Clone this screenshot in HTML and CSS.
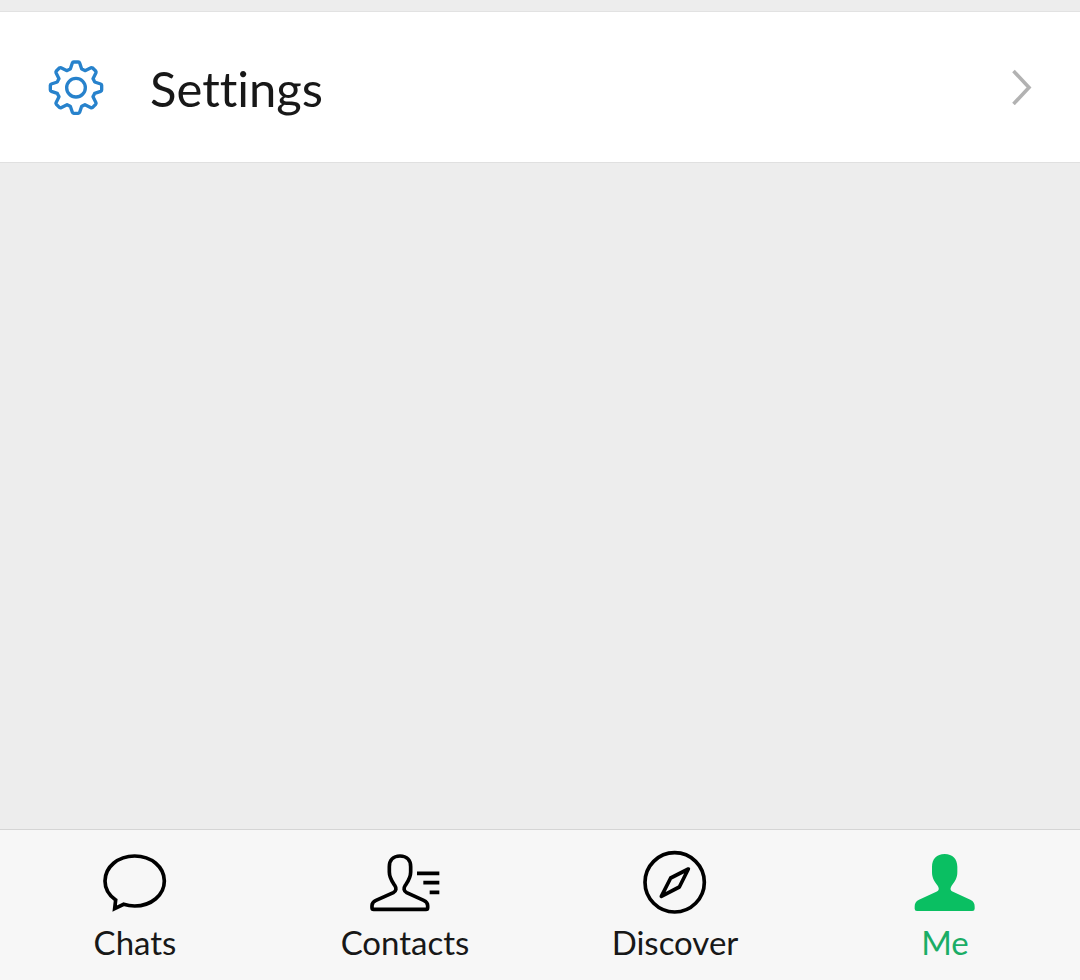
FILE: index.html
```html
<!DOCTYPE html>
<html lang="en">
<head>
<meta charset="utf-8">
<meta name="viewport" content="width=device-width, initial-scale=1">
<title>Me</title>
<link rel="stylesheet" href="styles.css">
</head>
<body>
<main class="content">
  <a class="cell" href="#settings">
    <svg class="cell-icon" viewBox="0 0 180 180" aria-hidden="true">
      <g transform="translate(90 92)" fill="none" stroke="#2782cc" stroke-width="10" stroke-linejoin="round">
        <path d="M-17-56L-11-74Q-10-77-7-77H7Q10-77 11-74L17-56Q22-54 27-51L45-60Q47-61 50-59L59-50Q61-47 60-45L51-27Q54-22 56-17L74-11Q77-10 77-7V7Q77 10 74 11L56 17Q54 22 51 27L60 45Q61 47 59 50L50 59Q47 61 45 60L27 51Q22 54 17 56L11 74Q10 77 7 77H-7Q-10 77-11 74L-17 56Q-22 54-27 51L-45 60Q-47 61-50 59L-59 50Q-61 47-60 45L-51 27Q-54 22-56 17L-74 11Q-77 10-77 7V-7Q-77-10-74-11L-56-17Q-54-22-51-27L-60-45Q-61-47-59-50L-50-59Q-47-61-45-60L-27-51Q-22-54-17-56Z"/>
        <circle r="28"/>
      </g>
    </svg>
    <span class="cell-label">Settings</span>
    <svg class="chevron" viewBox="0 0 20 36" aria-hidden="true"><path d="M1.500 2L17 18.500L1.500 35" fill="none" stroke="#b2b2b2" stroke-width="3.600"/></svg>
  </a>
</main>
<nav class="tabs" aria-label="Main">
  <a class="tab" href="#chats">
    <svg class="tab-icon" viewBox="0 30 270 204" aria-hidden="true"><path d="M74 206L101 193Q117 198 134 198C184 198 223 165 223 123S184 48 134 48S45 81 45 123C45 146 57 166 77 180Z" fill="none" stroke="#000" stroke-width="11"/></svg>
    <span>Chats</span>
  </a>
  <a class="tab" href="#contacts">
    <svg class="tab-icon" viewBox="0 30 270 204" aria-hidden="true"><path d="M120 48C99 48 88 61 88 80V96C88 114 96 124 104 136C110 145 109 153 100 158L48 181C39 185 36 189 36 197V203Q36 208 41 208H198Q203 208 203 203V197C203 189 200 185 191 181L140 158C131 153 130 145 136 136C144 124 152 114 152 96V80C152 61 141 48 120 48Z" fill="none" stroke="#000" stroke-width="11"/><path d="M171 100H238M190 128H238M209 157H238" fill="none" stroke="#000" stroke-width="11"/></svg>
    <span>Contacts</span>
  </a>
  <a class="tab" href="#discover">
    <svg class="tab-icon" viewBox="0 30 270 204" aria-hidden="true"><g fill="none" stroke="#000" stroke-linejoin="round"><circle cx="134" cy="127" r="89" stroke-width="11"/><path d="M175 87L122 114L94 169L148 141Z" stroke-width="11"/></g></svg>
    <span>Discover</span>
  </a>
  <a class="tab active" href="#me" aria-current="page">
    <svg class="tab-icon" viewBox="0 30 270 204" aria-hidden="true"><path d="M134 42C110 42 96 57 96 80V96C96 114 103 124 113 137C118 145 118 151 109 155L57 179C47 184 44 190 44 200V206Q44 213 51 213H217Q224 213 224 206V200C224 190 221 184 211 179L159 155C150 151 150 145 155 137C165 124 172 114 172 96V80C172 57 158 42 134 42Z" fill="#0abf62"/></svg>
    <span>Me</span>
  </a>
</nav>
</body>
</html>
```
FILE: styles.css
```css
* {
  box-sizing: border-box;
}

body {
  display: flex;
  flex-direction: column;
  min-height: 100vh;
  margin: 0;
  background: #ededed;
  color: #181818;
  font-family: Lato, "Noto Sans", sans-serif;
  font-variant-ligatures: none;
}

a {
  color: inherit;
  text-decoration: none;
}

.content {
  flex: 1;
  padding-top: 11px;
}

.cell {
  display: flex;
  align-items: center;
  padding: 45px 48px 45px 46px;
  border-top: 1px solid #e2e2e2;
  border-bottom: 1px solid #e0e0e0;
  background: #fff;
}

.cell-icon {
  width: 60px;
  height: 60px;
}

.cell-label {
  flex: 1;
  margin-left: 44px;
  padding-top: 2px;
  font-size: 49px;
  line-height: 58px;
}

.chevron {
  width: 20px;
  height: 36px;
}

.tabs {
  display: grid;
  grid-template-columns: repeat(4, 1fr);
  border-top: 1px solid #d5d5d5;
  background: #f7f7f7;
}

.tab {
  display: flex;
  flex-direction: column;
  align-items: center;
  padding: 20px 0 18px;
  font-size: 33px;
  line-height: 40px;
}

.tab-icon {
  width: 90px;
  height: 68px;
  margin-bottom: 4px;
}

.active {
  color: #1aad66;
}
```
